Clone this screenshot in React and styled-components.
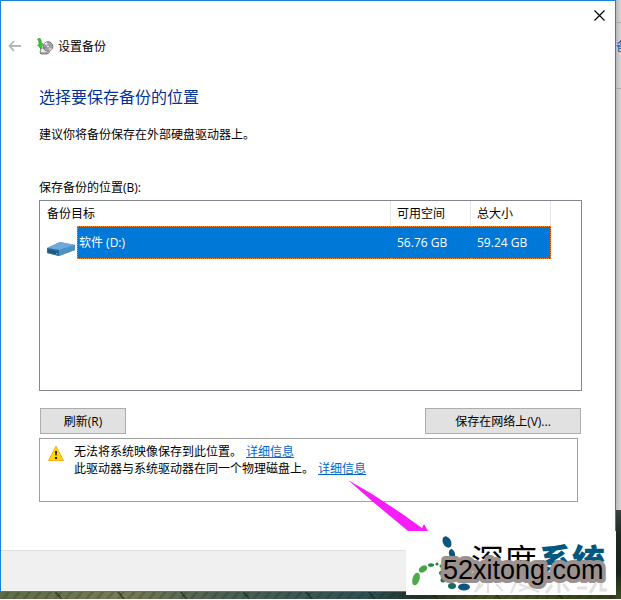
import React from 'react'
import styled, { createGlobalStyle } from 'styled-components'

const GlobalStyle = createGlobalStyle`
  * {
    box-sizing: border-box;
  }

  body {
    margin: 0;
    color: #000;
    font: 12px/17px 'Open Sans', 'Noto Sans CJK SC', sans-serif;
  }
`

const Desktop = styled.div`
  position: relative;
  display: grid;
  grid-template: 1fr 8px / 1fr 5px;
  min-height: 100vh;
`

const Window = styled.section`
  display: flex;
  flex-direction: column;
  border: 1px solid #1883d7;
  background: #fff;
`

const Behind = styled.aside`
  grid-row: 1 / 3;
  grid-column: 2;
  display: flex;
  flex-direction: column;
  overflow: hidden;
  color: #0a64c8;
  background: linear-gradient(90deg, #b8b8b8, #d8d8d8);
`

const BehindCell = styled.div`
  height: ${({ $height }) => $height}px;
  border-bottom: 1px solid #a8a8a8;
  padding-top: 15px;
  white-space: nowrap;
`

const Trees = styled.div`
  height: 90px;
  margin-top: auto;
  border-bottom: 1px solid #fff;
  background: linear-gradient(#35423f, #1c2820 30%, #18241a 70%, #3d4f20);
`

const Field = styled.div`
  border-bottom: 1px solid #fff;
  background:
    repeating-linear-gradient(50deg, transparent 0 46px, rgba(20, 30, 20, 0.5) 46px 48px),
    repeating-linear-gradient(130deg, transparent 0 5px, rgba(20, 30, 20, 0.2) 6px 8px),
    linear-gradient(90deg, #5c6b47, #777b56 20%, #4d6152 35%, #2e5052 60%, #233024 68%, #45551f 80%, #30401c);
`

const TitleBar = styled.div`
  display: flex;
  justify-content: flex-end;
  height: 28px;
`

const IconButton = styled.button`
  display: grid;
  place-items: center;
  width: ${({ $width }) => $width}px;
  border: 0;
  padding: 0;
  background: none;
`

const Header = styled.header`
  display: flex;
  align-items: center;
  height: 34px;
`

const AppIcon = styled.svg`
  margin: 0 4px 0 8px;
`

const Main = styled.main`
  flex: 1;
  padding: 23px 33px 40px 38px;
`

const Title = styled.h1`
  margin: 0 0 18px;
  color: #003399;
  font-size: 16px;
  font-weight: 400;
  line-height: 22px;
`

const Hint = styled.p`
  margin: 0 0 36px;
`

const ListBox = styled.div`
  min-height: 191px;
  margin: 4px 0 17px;
  border: 1px solid #828790;
  padding-right: 30px;
`

const Table = styled.table`
  width: 100%;
  border-collapse: separate;
  border-spacing: 0;
  table-layout: fixed;
`

const HeadCell = styled.th`
  width: ${({ $width }) => $width};
  height: 25px;
  border-right: 1px solid #e5e5e5;
  padding: 0 6px;
  font-weight: 400;
  text-align: left;

  &:first-child {
    padding-left: 7px;
  }
`

const Row = styled.tr`
  height: 33px;
  color: #fff;
`

const Cell = styled.td`
  padding: 0 6px;
  border: 1px dotted #ff8728;
  border-width: 1px 0;
  background: #0078d7;

  &:last-child {
    border-right-width: 1px;
  }
`

const NameCell = styled(Cell)`
  border: 0;
  padding: 0;
  background: none;
`

const Drive = styled.div`
  display: flex;
`

const DriveIcon = styled.svg`
  margin: 13px 1px 0 6px;
`

const DriveName = styled.span`
  flex: 1;
  border: 1px dotted #ff8728;
  border-right: 0;
  padding-left: 1px;
  line-height: 31px;
  background: #0078d7;
`

const Actions = styled.div`
  display: flex;
  justify-content: space-between;
  padding: 0 1px;
`

const Button = styled.button`
  width: ${({ $width }) => $width}px;
  height: 26px;
  border: 1px solid #adadad;
  padding: 0;
  color: inherit;
  font: inherit;
  background: #e1e1e1;
`

const Notice = styled.div`
  display: flex;
  gap: 9px;
  min-height: 64px;
  margin: 4px 4px 0 0;
  border: 1px solid #a0a0a0;
  padding: 4px 8px;
`

const WarningIcon = styled.svg`
  margin-top: 2px;
`

const NoticeLine = styled.p`
  display: flex;
  gap: 4px;
  margin: 0;
`

const Link = styled.a`
  color: #0066cc;
  text-decoration: underline;
`

const Footer = styled.footer`
  height: 41px;
  border-top: 1px solid #dfdfdf;
  background: #f0f0f0;
`

const Pointer = styled.svg`
  position: absolute;
  right: 193px;
  bottom: 69px;
  pointer-events: none;
`

const Watermark = styled.svg`
  position: absolute;
  right: 5px;
  bottom: 5px;
  background: #fff;
`

const BackButton = () => (
  <IconButton type="button" aria-label="后退" $width={28}>
    <svg width="14" height="12" viewBox="0 0 14 12" fill="none" stroke="#b5b5b5" strokeWidth="1.8">
      <path d="M6 1 1.5 6 6 11M1.5 6H13" />
    </svg>
  </IconButton>
)

const CloseButton = () => (
  <IconButton type="button" aria-label="关闭" $width={31}>
    <svg width="11" height="11" viewBox="0 0 11 11" stroke="#000" strokeWidth="1.2">
      <path d="M.5.5l10 10M10.5.5l-10 10" />
    </svg>
  </IconButton>
)

const BackupIcon = () => (
  <AppIcon width="17" height="17" viewBox="0 0 17 17">
    <path d="M4 10h9l-1 5-2 1H4l-1-1z" fill="#ececec" stroke="#85898b" />
    <path d="M3 15h8" stroke="#666" />
    <circle cx="11" cy="8.5" r="4.8" fill="#a6a5ad" stroke="#74737a" />
    <path d="M11 8.5 7.2 5.8A4.8 4.8 0 0 1 10 4z" fill="#e8e5ef" />
    <path d="m11 8.5 4.2 2.2a4.8 4.8 0 0 1-3 2.2z" fill="#d9c7bb" />
    <path d="m11 8.5-4 2.2-.6-2z" fill="#8177ae" />
    <circle cx="11" cy="8.5" r="1.5" fill="#eee" stroke="#6c6269" strokeWidth=".6" />
    <path d="M.5 1 3 .3Q4.5 2 4.5 6L6 5.5 4 11 .5 7l1.6-.3Q2.3 3 .5 1Z" fill="#35c52d" stroke="#159b15" strokeWidth=".5" />
  </AppIcon>
)

const DiskIcon = () => (
  <DriveIcon width="30" height="19" viewBox="0 0 30 19">
    <path d="M1 9 14 3l15 3v5l-16 6-12-3z" fill="#3d83bb" />
    <path d="M1 9 14 3l15 3-16 5z" fill="#6faadb" />
    <path d="m1 9 12 2v6L1 14z" fill="#2e6f9f" />
    <path d="m2 10.5 10 2v3.2L2 13.2z" fill="#205773" />
    <path d="m10 14 1.5.3v1l-1.5-.3z" fill="#49e1a2" />
    <path d="m13 11 16-5v5l-16 6z" fill="#4d91c9" />
  </DriveIcon>
)

const AlertIcon = () => (
  <WarningIcon width="17" height="17" viewBox="0 0 17 17">
    <path d="M8 1.2 15.5 15.5H.5z" fill="#ffd800" stroke="#efb01c" strokeLinejoin="round" />
    <path d="M7 6h2l-.4 4.5H7.4zM7 12h2v2H7z" fill="#111" />
  </WarningIcon>
)

const SiteMark = () => (
  <Watermark width="210" height="64" viewBox="0 0 210 64">
    <g fill="#0a5680">
      <ellipse cx="41" cy="11" rx="4" ry="6" transform="rotate(-28 41 11)" />
      <ellipse cx="46" cy="23" rx="3" ry="5" transform="rotate(-15 46 23)" />
      <ellipse cx="58" cy="56" rx="6" ry="3.5" />
    </g>
    <ellipse cx="10" cy="48" rx="3.5" ry="6.5" fill="#4baa45" transform="rotate(18 10 48)" />
    <ellipse cx="17" cy="38" rx="4.5" ry="3" fill="#45a445" transform="rotate(-35 17 38)" />
    <g fill="#258546">
      <ellipse cx="25" cy="34" rx="3" ry="1.8" />
      <circle cx="31" cy="33" r="1.6" />
      <circle cx="35" cy="35" r="1.5" />
    </g>
    <g fill="#176d5a">
      <circle cx="35" cy="42" r="2" />
      <circle cx="37" cy="49" r="2.5" />
      <ellipse cx="46" cy="55" rx="4" ry="3" />
    </g>
    <g fontFamily="'Noto Sans CJK SC', sans-serif" fontSize="33">
      <text x="65" y="42" fontWeight="400">深度</text>
      <text x="133" y="42" fontWeight="900" fill="#005780">系统</text>
    </g>
    <g fill="none" stroke="#e2e2e2" strokeWidth="2">
      <path d="m69 61 5-9M82 62V50M77 53l-8 8M90 53l7 7M105 62l5-11M113 60l20-7M113 53l20 8" />
      <path d="m140 62 6-8M153 62V51M163 60l-6-7M171 57h10M184 62l6-10M195 52v7h6" strokeWidth="3" />
    </g>
    <text
      x="37"
      y="48"
      fontFamily="'Liberation Sans', sans-serif"
      fontSize="27"
      stroke="#9d9190"
      strokeWidth="8"
      strokeLinejoin="round"
      paintOrder="stroke"
    >
      52xitong.com
    </text>
  </Watermark>
)

const App = () => (
  <>
    <GlobalStyle />
    <Desktop>
      <Window>
        <TitleBar>
          <CloseButton />
        </TitleBar>
        <Header>
          <BackButton />
          <BackupIcon />
          <span>设置备份</span>
        </Header>
        <Main>
          <Title>选择要保存备份的位置</Title>
          <Hint>建议你将备份保存在外部硬盘驱动器上。</Hint>
          <div id="targets-label">保存备份的位置(B):</div>
          <ListBox>
            <Table aria-labelledby="targets-label">
              <thead>
                <tr>
                  <HeadCell $width="auto">备份目标</HeadCell>
                  <HeadCell $width="80px">可用空间</HeadCell>
                  <HeadCell $width="80px">总大小</HeadCell>
                </tr>
              </thead>
              <tbody>
                <Row>
                  <NameCell>
                    <Drive>
                      <DiskIcon />
                      <DriveName>软件 (D:)</DriveName>
                    </Drive>
                  </NameCell>
                  <Cell>56.76 GB</Cell>
                  <Cell>59.24 GB</Cell>
                </Row>
              </tbody>
            </Table>
          </ListBox>
          <Actions>
            <Button type="button" $width={86}>刷新(R)</Button>
            <Button type="button" $width={156}>保存在网络上(V)...</Button>
          </Actions>
          <Notice>
            <AlertIcon />
            <div>
              <NoticeLine>
                无法将系统映像保存到此位置。 <Link href="#image">详细信息</Link>
              </NoticeLine>
              <NoticeLine>
                此驱动器与系统驱动器在同一个物理磁盘上。 <Link href="#disk">详细信息</Link>
              </NoticeLine>
            </div>
          </Notice>
        </Main>
        <Footer />
      </Window>
      <Field />
      <Behind>
        <BehindCell $height={23} />
        <BehindCell $height={66}>备</BehindCell>
        <Trees />
      </Behind>
      <Pointer width="80" height="51" viewBox="0 0 80 51">
        <path d="M0 0 24 14 53 33 74 48l2-4 4 7H60L24 21z" fill="#f81cf8" />
      </Pointer>
      <SiteMark />
    </Desktop>
  </>
)

export default App
